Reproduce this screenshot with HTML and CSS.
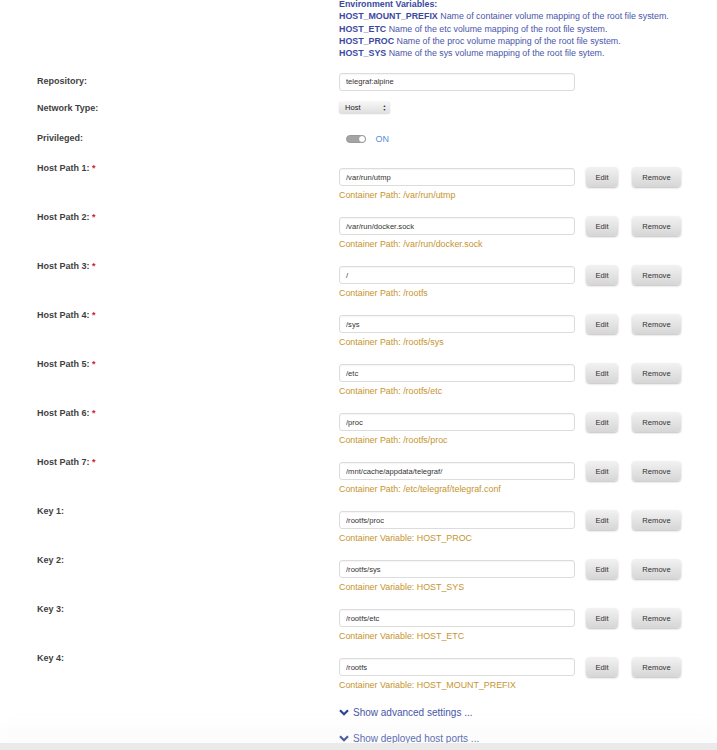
FILE: index.html
```html
<!DOCTYPE html>
<html lang="en">
<head>
  <meta charset="UTF-8">
  <title>Update Container</title>
  <link rel="stylesheet" href="styles.css">
</head>
<body>
  <div class="form">
    <div class="row env-row">
      <div class="label"></div>
      <div class="env">
        <b>Environment Variables:</b><br>
        <b>HOST_MOUNT_PREFIX</b> Name of container volume mapping of the root file system.<br>
        <b>HOST_ETC</b> Name of the etc volume mapping of the root file system.<br>
        <b>HOST_PROC</b> Name of the proc volume mapping of the root file system.<br>
        <b>HOST_SYS</b> Name of the sys volume mapping of the root file sytem.
      </div>
    </div>

    <div class="row inline repo-row">
      <div class="label">Repository:</div>
      <div class="value"><input type="text" class="text-input" value="telegraf:alpine"></div>
    </div>

    <div class="row inline net-row">
      <div class="label">Network Type:</div>
      <div class="value">
        <div class="select">Host<span class="arrows">&#9650;<br>&#9660;</span></div>
      </div>
    </div>

    <div class="row inline priv-row">
      <div class="label">Privileged:</div>
      <div class="value">
        <span class="switch"><span class="knob"></span></span>
        <span class="switch-text">ON</span>
      </div>
    </div>

    <div class="row path">
      <div class="label">Host Path 1: <span class="req">*</span></div>
      <div class="value">
        <div class="line"><input type="text" class="text-input" value="/var/run/utmp"><button class="btn edit">Edit</button><button class="btn remove">Remove</button></div>
        <div class="hint">Container Path: /var/run/utmp</div>
      </div>
    </div>

    <div class="row path">
      <div class="label">Host Path 2: <span class="req">*</span></div>
      <div class="value">
        <div class="line"><input type="text" class="text-input" value="/var/run/docker.sock"><button class="btn edit">Edit</button><button class="btn remove">Remove</button></div>
        <div class="hint">Container Path: /var/run/docker.sock</div>
      </div>
    </div>

    <div class="row path">
      <div class="label">Host Path 3: <span class="req">*</span></div>
      <div class="value">
        <div class="line"><input type="text" class="text-input" value="/"><button class="btn edit">Edit</button><button class="btn remove">Remove</button></div>
        <div class="hint">Container Path: /rootfs</div>
      </div>
    </div>

    <div class="row path">
      <div class="label">Host Path 4: <span class="req">*</span></div>
      <div class="value">
        <div class="line"><input type="text" class="text-input" value="/sys"><button class="btn edit">Edit</button><button class="btn remove">Remove</button></div>
        <div class="hint">Container Path: /rootfs/sys</div>
      </div>
    </div>

    <div class="row path">
      <div class="label">Host Path 5: <span class="req">*</span></div>
      <div class="value">
        <div class="line"><input type="text" class="text-input" value="/etc"><button class="btn edit">Edit</button><button class="btn remove">Remove</button></div>
        <div class="hint">Container Path: /rootfs/etc</div>
      </div>
    </div>

    <div class="row path">
      <div class="label">Host Path 6: <span class="req">*</span></div>
      <div class="value">
        <div class="line"><input type="text" class="text-input" value="/proc"><button class="btn edit">Edit</button><button class="btn remove">Remove</button></div>
        <div class="hint">Container Path: /rootfs/proc</div>
      </div>
    </div>

    <div class="row path">
      <div class="label">Host Path 7: <span class="req">*</span></div>
      <div class="value">
        <div class="line"><input type="text" class="text-input" value="/mnt/cache/appdata/telegraf/"><button class="btn edit">Edit</button><button class="btn remove">Remove</button></div>
        <div class="hint">Container Path: /etc/telegraf/telegraf.conf</div>
      </div>
    </div>

    <div class="row path">
      <div class="label">Key 1:</div>
      <div class="value">
        <div class="line"><input type="text" class="text-input" value="/rootfs/proc"><button class="btn edit">Edit</button><button class="btn remove">Remove</button></div>
        <div class="hint">Container Variable: HOST_PROC</div>
      </div>
    </div>

    <div class="row path">
      <div class="label">Key 2:</div>
      <div class="value">
        <div class="line"><input type="text" class="text-input" value="/rootfs/sys"><button class="btn edit">Edit</button><button class="btn remove">Remove</button></div>
        <div class="hint">Container Variable: HOST_SYS</div>
      </div>
    </div>

    <div class="row path">
      <div class="label">Key 3:</div>
      <div class="value">
        <div class="line"><input type="text" class="text-input" value="/rootfs/etc"><button class="btn edit">Edit</button><button class="btn remove">Remove</button></div>
        <div class="hint">Container Variable: HOST_ETC</div>
      </div>
    </div>

    <div class="row path">
      <div class="label">Key 4:</div>
      <div class="value">
        <div class="line"><input type="text" class="text-input" value="/rootfs"><button class="btn edit">Edit</button><button class="btn remove">Remove</button></div>
        <div class="hint">Container Variable: HOST_MOUNT_PREFIX</div>
      </div>
    </div>

    <div class="row toggles">
      <div class="label"></div>
      <div class="value">
        <a class="more"><svg class="chev" viewBox="0 0 10 7" width="10" height="7"><path d="M1 1.2 L5 5.2 L9 1.2" fill="none" stroke="currentColor" stroke-width="2.2"/></svg>Show advanced settings ...</a>
        <a class="more"><svg class="chev" viewBox="0 0 10 7" width="10" height="7"><path d="M1 1.2 L5 5.2 L9 1.2" fill="none" stroke="currentColor" stroke-width="2.2"/></svg>Show deployed host ports ...</a>
      </div>
    </div>
  </div>

  <div class="footer"></div>
</body>
</html>
```

FILE: styles.css
```css
body {
  margin: 0;
  background: #fff;
  font-family: 'Liberation Sans', Arial, sans-serif;
  color: #444;
}
.row {
  display: grid;
  grid-template-columns: 302px 1fr;
  padding-left: 37px;
}
.label {
  font-size: 9px;
  font-weight: bold;
  line-height: 12px;
  color: #3f3f3f;
}
.req {
  color: #d42020;
}

/* environment notes */
.env {
  font-size: 8.85px;
  line-height: 12.3px;
  color: #4a55ab;
  margin-top: -2px;
}
.env b {
  color: #3a499f;
}

.inline {
  align-items: center;
}
.repo-row {
  margin-top: 11px;
  height: 18px;
}
.net-row {
  margin-top: 11px;
  height: 18px;
}
.priv-row {
  margin-top: 12px;
  height: 18px;
}

.text-input {
  box-sizing: border-box;
  width: 236px;
  height: 18px;
  padding: 0 6px;
  border: 1px solid #dcdcdc;
  border-radius: 3px;
  background: #fff;
  font-family: 'Liberation Sans', Arial, sans-serif;
  font-size: 7.6px;
  color: #333;
  box-shadow: inset 0 1px 1px rgba(0,0,0,0.04);
  margin: 0;
}

.select {
  box-sizing: border-box;
  width: 51px;
  height: 12px;
  border-radius: 3px;
  background: linear-gradient(to bottom, #f6f6f6, #dedede);
  box-shadow: 0 0 1px rgba(0,0,0,0.35);
  font-size: 7.6px;
  line-height: 12px;
  padding-left: 6px;
  color: #222;
  position: relative;
}
.arrows {
  position: absolute;
  right: 4px;
  top: 2px;
  font-size: 3.4px;
  line-height: 4px;
  color: #333;
}

.switch {
  display: inline-block;
  vertical-align: middle;
  margin-left: 7px;
  width: 20px;
  height: 8px;
  border-radius: 5px;
  background: #a4a4a4;
  border: 1px solid #9a9a9a;
  box-sizing: border-box;
  position: relative;
}
.knob {
  position: absolute;
  right: -1px;
  top: -1px;
  width: 8px;
  height: 8px;
  border-radius: 50%;
  background: #fff;
  border: 1px solid #9a9a9a;
  box-sizing: border-box;
}
.switch-text {
  display: inline-block;
  vertical-align: middle;
  margin-left: 5px;
  font-size: 9px;
  color: #5b8dd6;
}

/* path and key rows */
.path {
  margin-top: 14px;
  height: 35px;
}
.path .value {
  padding-top: 7px;
}
.path .label {
  padding-top: 1px;
}
.line {
  display: flex;
  align-items: center;
  height: 18px;
}
.btn {
  box-sizing: border-box;
  height: 20px;
  border: none;
  border-radius: 4px;
  background: linear-gradient(to bottom, #f2f2f2, #d6d6d6);
  box-shadow: 0 1px 2px rgba(0,0,0,0.25);
  font-family: 'Liberation Sans', Arial, sans-serif;
  font-size: 7.6px;
  color: #333;
  padding: 0;
}
.edit {
  width: 32px;
  margin-left: 11px;
}
.remove {
  width: 49px;
  margin-left: 14px;
}
.hint {
  margin-top: 3px;
  font-size: 8.9px;
  line-height: 12px;
  color: #c6942e;
}

.toggles {
  margin-top: 20px;
}
.more {
  display: flex;
  align-items: center;
  height: 12px;
  font-size: 10px;
  color: #4656a8;
  margin-bottom: 14px;
}
.chev {
  margin-right: 4px;
  color: #2e4391;
}

.footer {
  position: fixed;
  left: 0;
  right: 0;
  bottom: 0;
  height: 7px;
  background: #eaeaea;
  box-shadow: 0 -10px 20px rgba(235,235,235,0.6);
}
```
